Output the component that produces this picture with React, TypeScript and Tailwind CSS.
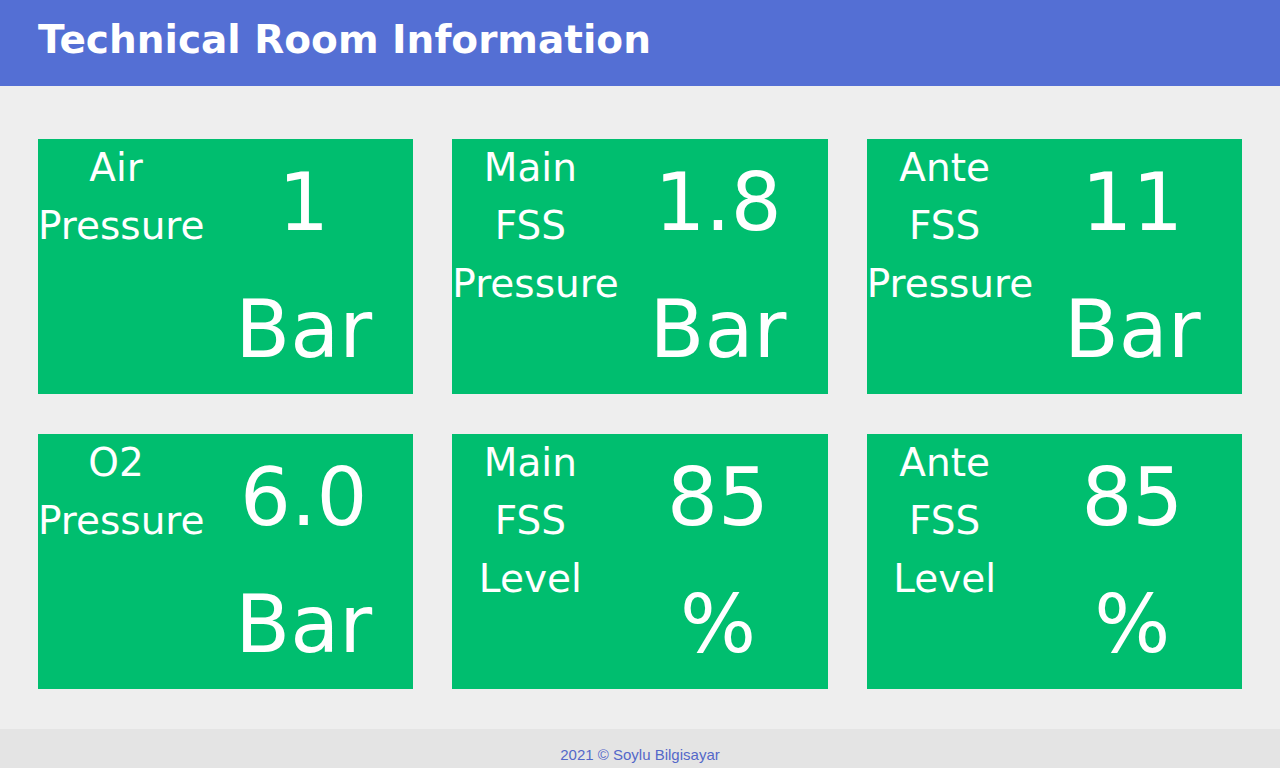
import React from 'react';

interface Reading {
    label: string[];
    value: string;
    unit: string;
}

const readings: Reading[] = [
    { label: ['Air', 'Pressure'], value: '1', unit: 'Bar' },
    { label: ['Main', 'FSS', 'Pressure'], value: '1.8', unit: 'Bar' },
    { label: ['Ante', 'FSS', 'Pressure'], value: '11', unit: 'Bar' },
    { label: ['O2', 'Pressure'], value: '6.0', unit: 'Bar' },
    { label: ['Main', 'FSS', 'Level'], value: '85', unit: '%' },
    { label: ['Ante', 'FSS', 'Level'], value: '85', unit: '%' },
];

function ReadingCard({ reading }: { reading: Reading }) {
    return (
        <div className="flex h-[255px] bg-[#00be6f] text-white">
            <div className="w-[156px] shrink-0 text-center text-[39px] leading-[58px]">
                {reading.label.map((word) => (
                    <div key={word}>{word}</div>
                ))}
            </div>
            <div className="flex flex-1 flex-col text-[80px] leading-none">
                <div className="flex flex-1 items-center justify-center">
                    {reading.value}
                </div>
                <div className="flex flex-1 items-center justify-center">
                    {reading.unit}
                </div>
            </div>
        </div>
    );
}

export default function App() {
    return (
        <div className="min-h-screen bg-[#eeeeee] font-['DejaVu_Sans',sans-serif]">
            <header className="flex h-[86px] items-center bg-[#546fd4] pl-[38px] pb-[6px]">
                <h1 className="text-[39px] font-bold text-white">
                    Technical Room Information
                </h1>
            </header>

            <main className="grid grid-cols-3 gap-x-[39px] gap-y-[40px] px-[38px] pt-[53px] pb-[40px]">
                {readings.map((reading, i) => (
                    <ReadingCard key={i} reading={reading} />
                ))}
            </main>

            <footer className="bg-[#e4e4e4] pt-[16px] pb-4 text-center font-['Liberation_Sans',Arial,sans-serif] text-[15px] leading-5 text-[#5468c9]">
                2021 © Soylu Bilgisayar
            </footer>
        </div>
    );
}
